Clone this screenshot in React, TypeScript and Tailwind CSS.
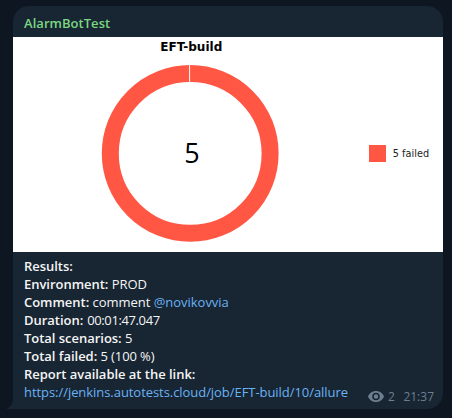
import type { ReactNode } from "react";

function Field({ label, children }: { label: string; children?: ReactNode }) {
  return (
    <p className="whitespace-pre">
      <span className="font-semibold">{label}</span>
      {children}
    </p>
  );
}

function DonutChart() {
  return (
    <svg className="block h-[215px] w-[430px] bg-white" viewBox="0 0 430 215">
      <text x="147.3" y="13.7" textLength="62" lengthAdjust="spacingAndGlyphs" fontSize="11.5" fontWeight="700" fontFamily="'DejaVu Sans', sans-serif">EFT-build</text>
      <circle cx="177.2" cy="116.4" r="79.9" fill="none" stroke="#ff5744" strokeWidth="17" />
      <path d="M176.6 27v18" stroke="#fff" strokeWidth="1" />
      <text x="171.3" y="126.4" fontSize="27" fontFamily="'Open Sans', sans-serif">5</text>
      <rect x="356" y="108" width="17" height="17" fill="#ff5744" />
      <text x="379.7" y="120.3" textLength="36.5" fontSize="9.7" fill="#222" fontFamily="'DejaVu Sans', sans-serif">5 failed</text>
    </svg>
  );
}

function EyeIcon() {
  return (
    <svg className="h-[11px] w-[16px] -translate-y-px" viewBox="0 0 16 11">
      <path fillRule="evenodd" fill="#6d7f8f" d="M8 0C4.4 0 1.3 2.1 0 5.5 1.3 8.9 4.4 11 8 11s6.7-2.1 8-5.5C14.7 2.1 11.6 0 8 0Zm0 9.3a3.8 3.8 0 1 1 0-7.6 3.8 3.8 0 0 1 0 7.6Zm0-6a2.2 2.2 0 1 0 0 4.4 2.2 2.2 0 0 0 0-4.4Z" />
    </svg>
  );
}

export default function App() {
  return (
    <main className="h-[418px] w-[452px] bg-[#0e1621] pt-[6px] pl-[13px] font-['Open_Sans',sans-serif] text-[13px] leading-[18px] text-[#f5f5f5]">
      <article className="relative h-[403px] w-[430px] rounded-t-[16px] rounded-br-[16px] bg-[#182533]">
        <svg className="absolute bottom-0 -left-[6px] h-[11px] w-[6px]" viewBox="0 0 6 11">
          <path d="M6 0C6 5 4 9 0 10.3V11h6Z" fill="#182533" />
        </svg>
        <h1 className="h-[31px] pt-[8px] pl-[11px] font-semibold tracking-[0.04px] text-[#7bd782]">AlarmBotTest</h1>
        <DonutChart />
        <div className="flex justify-between pt-[5px] pr-[9px] pl-[11px]">
          <div>
            <div className="tracking-[-0.03px]">
              <Field label="Results:" />
              <Field label="Environment:"> PROD</Field>
              <Field label="Comment:"> comment <a className="text-[#6ab3f3]">@novikovvia</a></Field>
              <Field label="Duration:"><span className="ml-px tracking-[-0.38px]"> 00:01:47.047</span></Field>
              <Field label="Total scenarios:"> 5</Field>
              <Field label="Total failed:"><span className="tracking-[-0.1px]"> 5 (100 %)</span></Field>
              <Field label="Report available at the link:" />
            </div>
            <a className="block whitespace-nowrap tracking-[-0.055px] text-[#6ab3f3]">https://jenkins.autotests.cloud/job/EFT-build/10/allure</a>
          </div>
          <div className="flex translate-y-[5px] items-center self-end text-[12px] text-[#6d7f8f]">
            <EyeIcon />
            <span className="ml-[4px]">2</span>
            <time className="ml-[8.5px]">21:37</time>
          </div>
        </div>
      </article>
    </main>
  );
}
